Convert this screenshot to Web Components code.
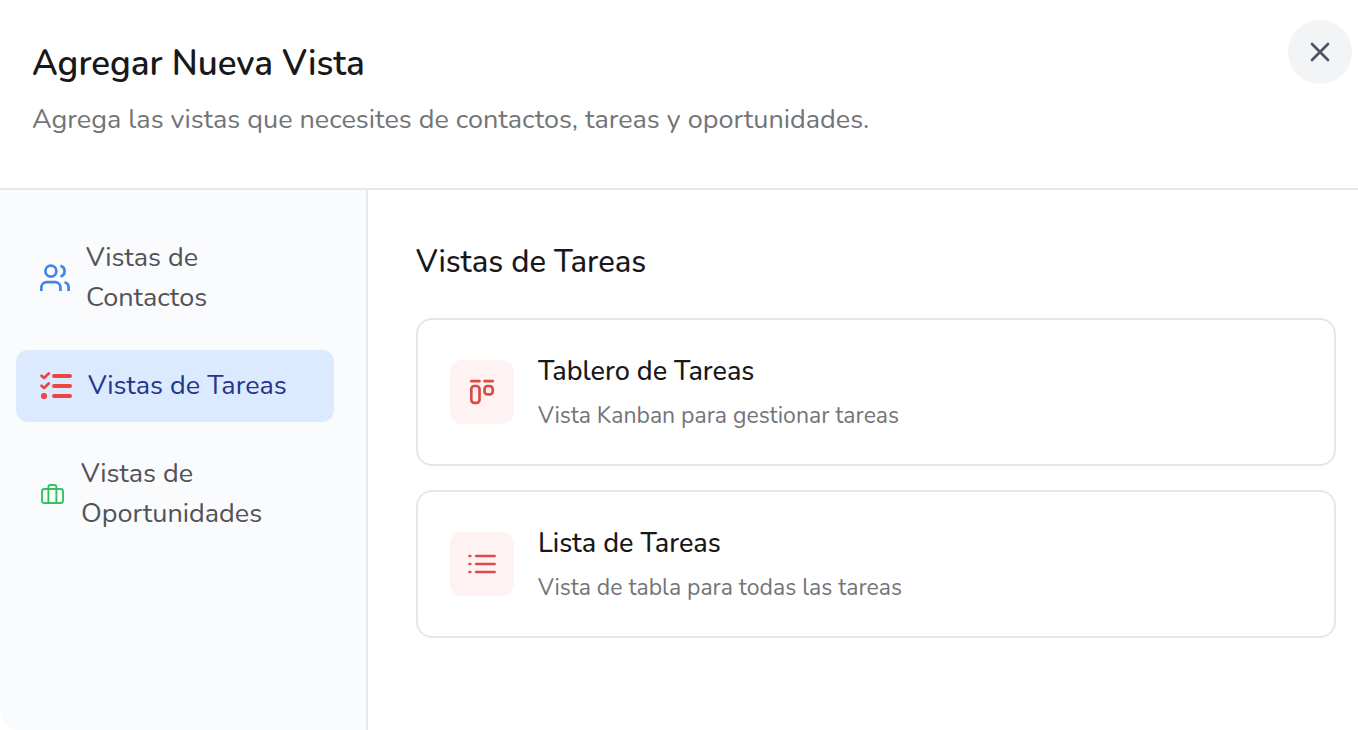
<!DOCTYPE html>
<html lang="es">
<head>
<meta charset="utf-8">
<meta name="viewport" content="width=device-width, initial-scale=1">
<title>Agregar Nueva Vista</title>
<style>
  body {
    margin: 0;
    background: #fff;
    color: #18181b;
    font-family: Nunito, Lato, "Open Sans", sans-serif;
  }
</style>
</head>
<body>
<view-dialog>
  <dialog-header slot="header">
    <span slot="title">Agregar Nueva Vista</span>
    <span slot="description">Agrega las vistas que necesites de contactos, tareas y oportunidades.</span>
  </dialog-header>

  <view-tab slot="tabs" icon="users">Vistas de Contactos</view-tab>
  <view-tab slot="tabs" icon="tasks" active>Vistas de Tareas</view-tab>
  <view-tab slot="tabs" icon="briefcase">Vistas de Oportunidades</view-tab>

  <span slot="heading">Vistas de Tareas</span>
  <view-card icon="kanban">
    Tablero de Tareas
    <span slot="description">Vista Kanban para gestionar tareas</span>
  </view-card>
  <view-card icon="list">
    Lista de Tareas
    <span slot="description">Vista de tabla para todas las tareas</span>
  </view-card>
</view-dialog>

<script>
// width, height, viewBox and strokes of every icon
const icons = {
  close: [32, 32, "0 0 32 32", `
    <path d="M8 8l16 16M24 8L8 24" stroke-width="2.7"/>`],
  users: [30, 30, "1 1 22 22", `
    <g stroke-width="2" stroke-linecap="butt">
      <path d="M16 21.5V19a4 4 0 0 0-4-4H6a4 4 0 0 0-4 4v2.5"/>
      <circle cx="9" cy="7" r="4"/>
      <path d="M22 21.5V19a4 4 0 0 0-3-3.87"/>
      <path d="M16 3.13a4 4 0 0 1 0 7.75"/>
    </g>`],
  tasks: [32, 32, "0 0 32 32", `
    <path d="M14 6h16M14 16h16M14 26h16" stroke-width="4"/>
    <path d="M1.5 5.8L4 8l4.7-4.5M1.5 15.8L4 18l4.7-4.5" stroke-width="2.7"/>
    <circle cx="4" cy="26" r="3.1" fill="currentColor" stroke="none"/>`],
  briefcase: [25, 24, "0 0 25 24", `
    <rect x="2" y="7" width="21" height="14" rx="2.5" stroke-width="1.9"/>
    <path d="M8.4 21V5a2 2 0 0 1 2-2h4a2 2 0 0 1 2 2v16" stroke-width="1.9"/>`],
  kanban: [32, 32, "0 0 32 32", `
    <g stroke-width="2.7">
      <path d="M5.3 5.2h8.2M18.5 5.2h8.2"/>
      <rect x="5.3" y="10" width="8.2" height="16.8" rx="3"/>
      <rect x="18.5" y="10" width="8.2" height="8.4" rx="3"/>
    </g>`],
  list: [32, 32, "0 0 32 32", `
    <path d="M10.2 8h18.4M10.2 16h18.4M10.2 24h18.4M3.6 8h.6M3.6 16h.6M3.6 24h.6" stroke-width="2.7"/>`],
};

function icon(name) {
  const [width, height, viewBox, shapes] = icons[name];
  return `<svg width="${width}" height="${height}" viewBox="${viewBox}" fill="none" stroke="currentColor"
    stroke-linecap="round" stroke-linejoin="round" aria-hidden="true">${shapes}</svg>`;
}

const base = `
  *, ::before, ::after { box-sizing: border-box; }
  h1, h2, p { margin: 0; }
  button { margin: 0; font: inherit; color: inherit; text-align: left; cursor: pointer; }
  svg { display: block; flex: none; }
`;

class ViewElement extends HTMLElement {
  connectedCallback() {
    if (this.shadowRoot) return;
    const shadow = this.attachShadow({ mode: "open" });
    shadow.innerHTML = `<style>${base}${this.styles()}</style>${this.markup()}`;
  }
}

class ViewDialog extends ViewElement {
  styles() {
    return `
      :host { display: flex; flex-direction: column; min-height: 100vh; }
      .body { display: flex; flex: 1; }
      nav {
        display: flex;
        flex-direction: column;
        gap: 16px;
        flex: none;
        width: 368px;
        padding: 32px 32px 32px 16px;
        background: #fafbfd;
        border-right: 2px solid #e5e7eb;
        border-bottom-left-radius: 20px;
      }
      main { flex: 1; min-width: 0; padding: 48px 22px 48px 48px; }
      h2 { margin-bottom: 32px; font-size: 31px; line-height: 48px; font-weight: 500; }
      .cards { display: grid; gap: 24px; }
    `;
  }
  markup() {
    return `
      <slot name="header"></slot>
      <div class="body">
        <nav aria-label="Vistas"><slot name="tabs"></slot></nav>
        <main>
          <h2><slot name="heading"></slot></h2>
          <div class="cards"><slot></slot></div>
        </main>
      </div>
    `;
  }
}

class DialogHeader extends ViewElement {
  styles() {
    return `
      :host {
        display: flex;
        align-items: flex-start;
        justify-content: space-between;
        padding: 20px 6px 48px 32px;
        border-bottom: 2px solid #e5e7eb;
      }
      .text { display: grid; gap: 16px; padding-top: 24px; }
      h1 { font-size: 35px; line-height: 40px; font-weight: 600; }
      p { font-size: 27px; line-height: 40px; color: #737477; }
      button {
        display: grid;
        place-items: center;
        flex: none;
        width: 64px;
        height: 64px;
        padding: 0;
        border: 0;
        border-radius: 50%;
        background: #f3f4f6;
        color: #4b5563;
      }
    `;
  }
  markup() {
    return `
      <div class="text">
        <h1><slot name="title"></slot></h1>
        <p><slot name="description"></slot></p>
      </div>
      <button type="button" aria-label="Cerrar">${icon("close")}</button>
    `;
  }
}

class ViewTab extends ViewElement {
  styles() {
    return `
      :host { display: block; color: #525358; --icon: #4484e8; }
      :host([icon="tasks"]) { --icon: #ef4444; }
      :host([icon="briefcase"]) { --icon: #35c065; }
      :host([active]) { color: #27348b; }
      :host([active]) button { background: #dbeafe; }
      button {
        display: flex;
        align-items: center;
        gap: 16px;
        width: 100%;
        padding: 16px 24px;
        border: 0;
        border-radius: 12px;
        background: none;
        font-size: 27px;
        line-height: 40px;
      }
      svg { color: var(--icon); }
    `;
  }
  markup() {
    return `<button type="button">${icon(this.getAttribute("icon"))}<span><slot></slot></span></button>`;
  }
}

class ViewCard extends ViewElement {
  styles() {
    return `
      :host { display: block; }
      button {
        display: flex;
        align-items: center;
        gap: 24px;
        width: 100%;
        padding: 32px;
        border: 2px solid #e5e7eb;
        border-radius: 16px;
        background: #fff;
      }
      .icon {
        display: grid;
        place-items: center;
        flex: none;
        width: 64px;
        height: 64px;
        border-radius: 12px;
        background: #fef2f2;
        color: #dc4b45;
      }
      .text { display: grid; gap: 8px; }
      .title { font-size: 27px; line-height: 40px; font-weight: 500; }
      .description { font-size: 23px; line-height: 32px; color: #737477; }
    `;
  }
  markup() {
    return `
      <button type="button">
        <span class="icon">${icon(this.getAttribute("icon"))}</span>
        <span class="text">
          <span class="title"><slot></slot></span>
          <span class="description"><slot name="description"></slot></span>
        </span>
      </button>
    `;
  }
}

customElements.define("view-dialog", ViewDialog);
customElements.define("dialog-header", DialogHeader);
customElements.define("view-tab", ViewTab);
customElements.define("view-card", ViewCard);
</script>
</body>
</html>
